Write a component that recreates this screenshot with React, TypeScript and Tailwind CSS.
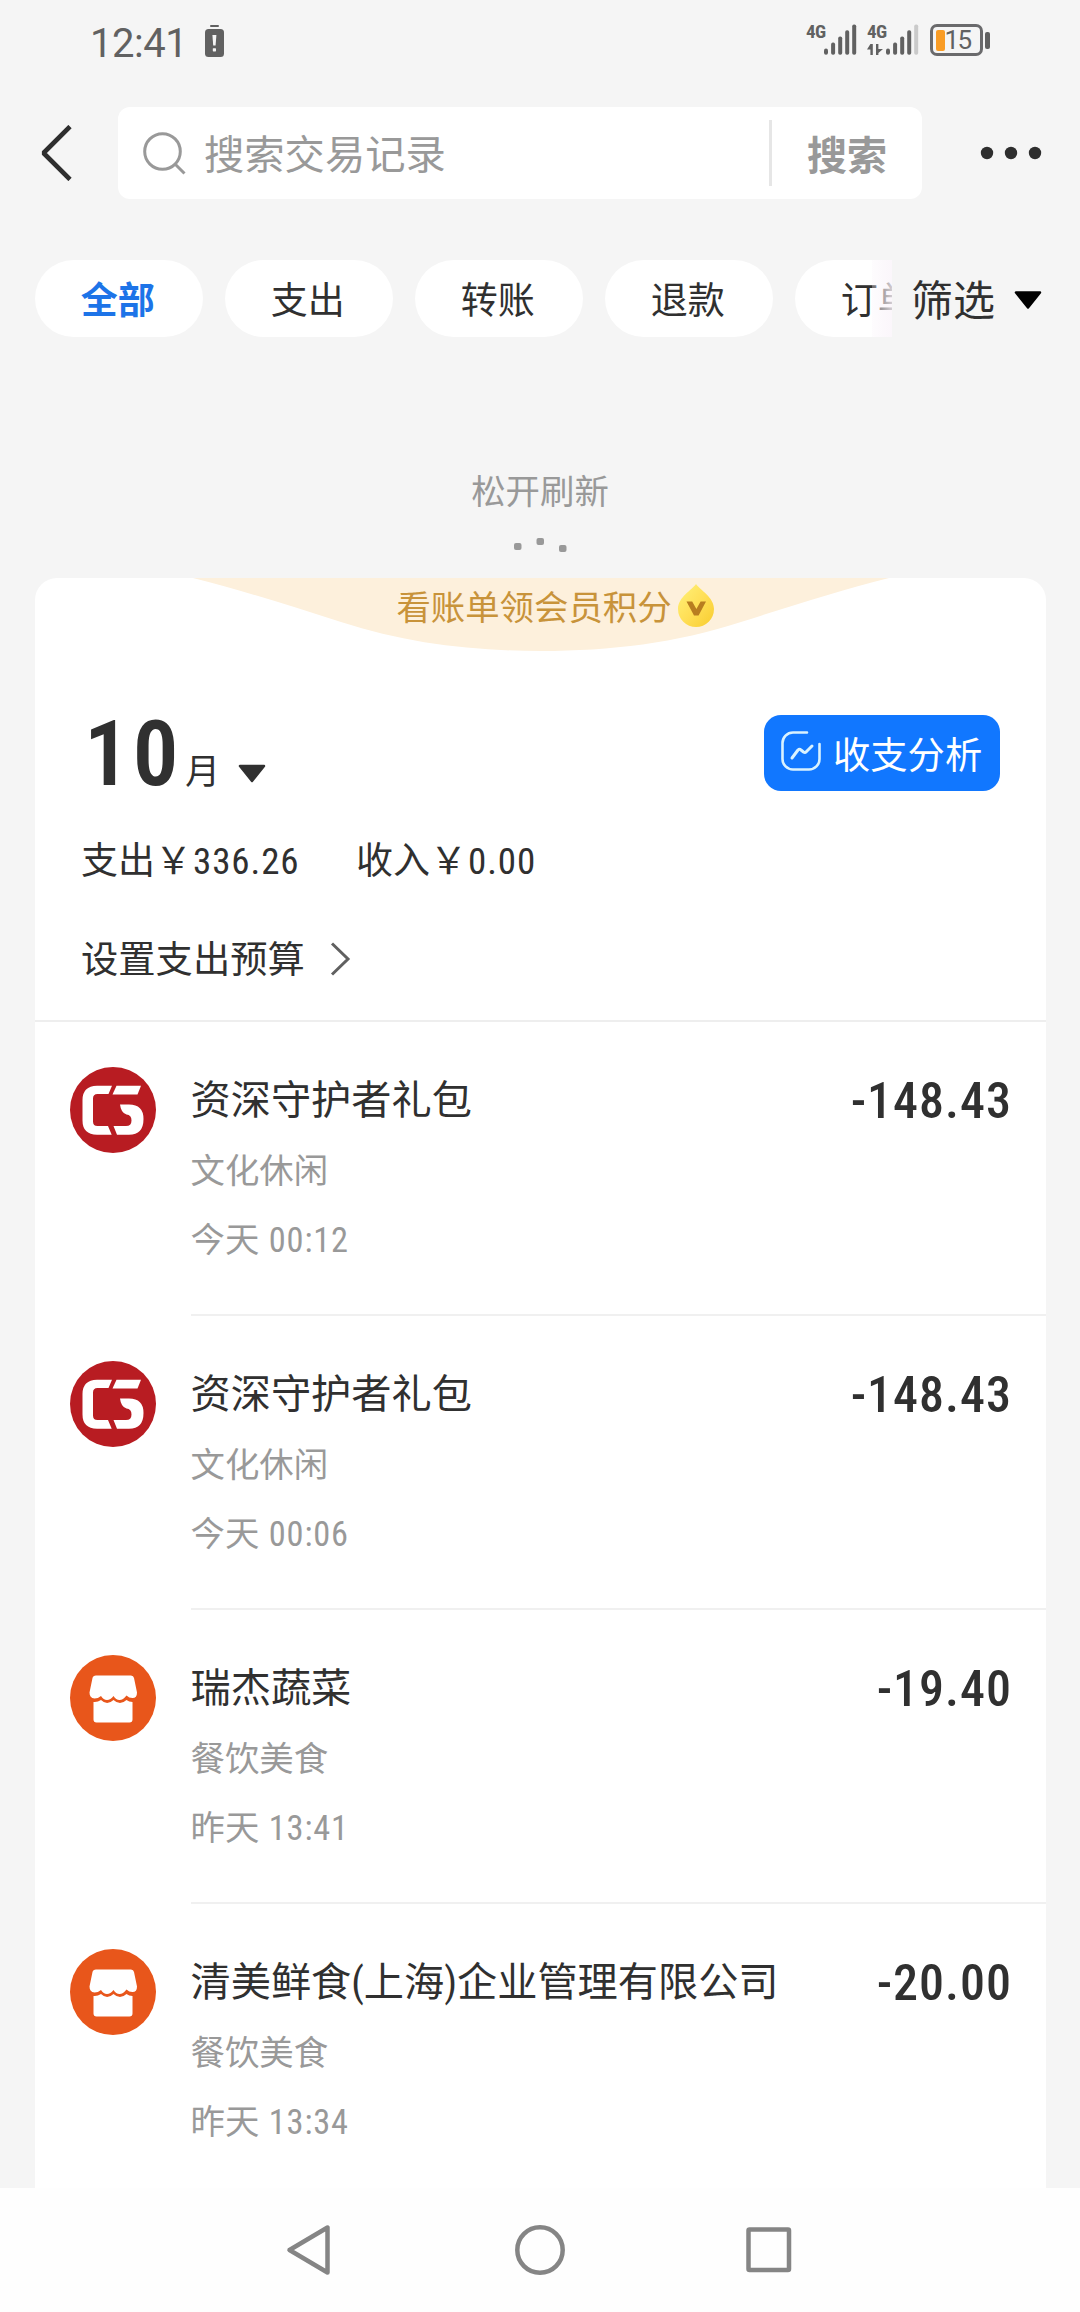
import { clsx } from "clsx";

interface Bill {
  id: number;
  logo: "c5" | "shop";
  title: string;
  category: string;
  day: string;
  time: string;
  amount: string;
}

const TABS = ["全部", "支出", "转账", "退款", "订单"];

const BILLS: Bill[] = [
  { id: 1, logo: "c5", title: "资深守护者礼包", category: "文化休闲", day: "今天", time: "00:12", amount: "-148.43" },
  { id: 2, logo: "c5", title: "资深守护者礼包", category: "文化休闲", day: "今天", time: "00:06", amount: "-148.43" },
  { id: 3, logo: "shop", title: "瑞杰蔬菜", category: "餐饮美食", day: "昨天", time: "13:41", amount: "-19.40" },
  { id: 4, logo: "shop", title: "清美鲜食(上海)企业管理有限公司", category: "餐饮美食", day: "昨天", time: "13:34", amount: "-20.00" },
];

function Signal({ weak = false }: { weak?: boolean }) {
  return (
    <svg width="33" height="32" viewBox="0 0 33 32" fill="#616161">
      <rect x="0" y="24.6" width="4" height="6.2" rx="2" />
      <rect x="7.1" y="18.6" width="4" height="12.2" rx="1.8" />
      <rect x="14.2" y="12.4" width="4" height="18.4" rx="1.8" />
      <rect x="21.2" y="6.2" width="4" height="24.6" rx="1.8" />
      <rect x="28.2" y="0.4" width="4" height="30.4" rx="1.8" fill={weak ? "#cacaca" : "#616161"} />
    </svg>
  );
}

function StatusBar() {
  return (
    <div className="flex h-[107px] shrink-0 items-start pt-[24px] text-[#616161]">
      <div className="ml-[90px] w-[115px] text-[40px] leading-[40px] font-[450] tracking-[-0.5px]">12:41</div>
      <svg width="20" height="34" viewBox="0 0 20 34" className="mt-px">
        <rect x="5" y="0" width="9" height="2" rx="1" fill="#616161" />
        <rect x="0" y="4" width="19" height="28" rx="3.5" fill="#616161" />
        <path d="M7.4 10h4l-.8 10.5h-2.4z" fill="#f5f5f5" />
        <rect x="7.8" y="23.2" width="3.2" height="3.2" rx=".6" fill="#f5f5f5" />
      </svg>

      <div className="mr-[90.5px] ml-auto flex">
        <div className="w-[18px] text-[19px] leading-[16px] font-bold font-stretch-condensed tracking-[-0.5px]">4G</div>
        <Signal />
        <div className="ml-[10px] flex w-[19px] flex-col gap-[4px]">
          <div className="text-[19px] leading-[16px] font-bold font-stretch-condensed tracking-[-0.5px]">4G</div>
          <svg width="16" height="11" viewBox="0 0 16 11" fill="#616161">
            <path d="M3.4 0h2.4v11H3.4V5.4H0zM9 0h2.4l0 5 4.6 0-4.6 4V11H9z" />
          </svg>
        </div>
        <Signal weak />
        <div className="ml-[11px] flex items-center">
          <div className="flex h-[32px] w-[53px] items-center rounded-[7px] border-[3px] border-[#6a6a6c] pl-[2.5px]">
            <div className="h-[21px] w-[9px] rounded-[2px] bg-[#f99c25]" />
            <div className="text-[26px] leading-[26px] tracking-[-1.5px]">15</div>
          </div>
          <div className="ml-[2px] h-[17px] w-[4.5px] rounded-[2px] bg-[#616161]" />
        </div>
      </div>
    </div>
  );
}

function SearchHeader() {
  return (
    <div className="flex h-[92px] shrink-0 items-center pr-[38px] pl-[39px]">
      <svg width="79" height="56" viewBox="0 0 79 56" fill="none" stroke="#2e2e2e" strokeWidth="4.6">
        <path d="M31 1.5 4.5 28 31 54.5" strokeLinejoin="bevel" />
      </svg>
      <div className="flex h-[92px] w-[804px] items-center rounded-[12px] bg-white text-[40.3px] leading-[44px] text-[#999999]">
        <svg width="46" height="46" viewBox="0 0 46 46" fill="none" stroke="#999999" strokeWidth="3" className="ml-[25px]">
          <circle cx="19.5" cy="21.5" r="17.8" />
          <path d="M32 34l9.5 9.5" />
        </svg>
        <div className="ml-[15px] flex-1 pt-[5px]">搜索交易记录</div>
        <div className="h-[66px] w-[3px] bg-[#e6e6e6]" />
        <div className="w-[150px] pt-[7px] pl-[35px] text-[40px] font-bold">搜索</div>
      </div>
      <svg width="62" height="14" viewBox="0 0 62 14" fill="#2e2e2e" className="ml-auto">
        <circle cx="7" cy="7" r="6.2" />
        <circle cx="31" cy="7" r="6.2" />
        <circle cx="55" cy="7" r="6.2" />
      </svg>
    </div>
  );
}

function FilterTabs() {
  return (
    <div className="mt-[61px] flex h-[77px] shrink-0 items-center pl-[35px]">
      <div className="relative flex h-full w-[857px] gap-[22.5px] overflow-hidden">
        {TABS.map((t, i) => (
          <div
            key={t}
            className={clsx(
              "flex h-full w-[167.5px] shrink-0 items-center justify-center rounded-full bg-white pt-[7px] pr-[2px] text-[37px]",
              i === 0 ? "font-bold text-[#1d74e8]" : "text-[#303030]",
            )}
          >
            {t}
          </div>
        ))}
        <div className="absolute top-0 right-0 h-full w-[20px] bg-linear-to-r from-[#faf4fa]/30 to-[#faf4fa]/80" />
      </div>
      <div className="ml-[19px] pt-[7px] text-[42px] leading-[46px] text-[#303030]">筛选</div>
      <svg width="30" height="20" viewBox="0 0 30 20" className="ml-[18px]">
        <path d="M3 3.5h24L15 18.500z" stroke="#000" strokeWidth="2.5" strokeLinejoin="round" />
      </svg>
    </div>
  );
}

function PointsBanner() {
  return (
    <div className="relative flex h-[74px] w-full shrink-0 justify-center pt-[11px]">
      <svg width="700" height="74" viewBox="0 0 700 74" className="absolute top-0 left-[156px]">
        <path d="M2 0C50 12 100 28 150 44C215 65 280 73 350 73C420 73 485 65 550 44C600 28 650 12 698 0Z" fill="#fdf0dc" />
      </svg>
      <div className="relative ml-[30px] flex h-[38px] items-center">
        <span className="text-[34.4px] leading-[38px] text-[#c8933a]">看账单领会员积分</span>
        <svg width="38" height="44" viewBox="0 0 38 44" className="mt-[-6px] ml-[5px]">
          <defs>
            <linearGradient id="drop" x1="0" y1="0" x2="1" y2="1">
              <stop offset="0" stopColor="#fff27a" />
              <stop offset="0.5" stopColor="#ffdf57" />
              <stop offset="1" stopColor="#f8cc2e" />
            </linearGradient>
          </defs>
          <path d="M19 1C23 7 37 14 37 26A18 18 0 0 1 1 26C1 14 15 7 19 1Z" fill="url(#drop)" />
          <path d="M9.5 18.5H15.2L19.4 26L23.6 18.5H29L21.6 32.5H17z" fill="#b87d20" />
        </svg>
      </div>
    </div>
  );
}

function MonthSummary() {
  return (
    <div className="flex h-[370px] shrink-0 flex-col border-b-2 border-[#eeeeee] pr-[46px] pl-[46px] text-[#303030]">
      <div className="mt-[63px] flex h-[76px] items-start">
        <div className="mt-[-1px] ml-[3px] w-[101px] text-[91px] leading-[80px] font-semibold font-stretch-condensed tracking-[3px]">10</div>
        <div className="mt-[41px] text-[35px] leading-[34px]">月</div>
        <svg width="30" height="20" viewBox="0 0 30 20" className="mt-[48px] ml-[17px]">
          <path d="M3 3h24L15 18z" fill="#303030" stroke="#303030" strokeWidth="2.5" strokeLinejoin="round" />
        </svg>
        <button className="ml-auto flex h-[76px] w-[236px] items-center rounded-[17px] bg-[#1177ff] pl-[17px] text-white">
          <svg width="40" height="40" viewBox="0 0 40 40" fill="none" stroke="#d9f2ff" strokeWidth="2.6" strokeLinecap="round" strokeLinejoin="round" className="mt-[-4px]">
            <path d="M26 1.5H12A10.5 10.5 0 0 0 1.5 12v16A10.5 10.5 0 0 0 12 38.5h16A10.5 10.5 0 0 0 38.5 28V13" />
            <path d="M11 27l6-8q1.5-1.5 3 0l2.5 2q1.5 1 2.5 0L31 15" strokeWidth="3" />
          </svg>
          <span className="ml-[12px] pt-[5px] text-[37.3px] leading-[40px]">收支分析</span>
        </button>
      </div>
      <div className="mt-[49px] flex h-[44px] items-center text-[37px] leading-[44px]">
        <div className="w-[275px]">
          支出￥<span className="ml-px font-stretch-semi-condensed tracking-[0.9px]">336.26</span>
        </div>
        <div>
          收入￥<span className="ml-px font-stretch-semi-condensed tracking-[0.9px]">0.00</span>
        </div>
      </div>
      <div className="mt-[54px] flex h-[44px] items-center text-[37.3px] leading-[44px]">
        设置支出预算
        <svg width="22" height="34" viewBox="0 0 22 34" fill="none" stroke="#606060" strokeWidth="3" className="mt-[-2px] ml-[25px]">
          <path d="M2 1.5L18 17 2 32.5" />
        </svg>
      </div>
    </div>
  );
}

function C5Logo() {
  return (
    <svg width="86" height="86" viewBox="0 0 86 86">
      <circle cx="43" cy="43" r="43" fill="#b81c22" />
      <g fill="#fff">
        <path d="M42 18.7H27Q12.5 19 12.5 33v20.500Q12.5 67.5 27 67.7H41.7L38 59H27.5Q23 59 23 54.5V31.5Q23 27 27.5 27H38.5z" />
        <path d="M46.5 18.7H71L67.5 27.500H42.5z" />
        <path d="M50 37.5H59Q73.5 37.500 73.5 52Q73.5 67.7 59 67.7H47L43.5 59H56Q61.500 59 61.500 53.500Q61.500 48 56.500 47.500Q51 46 50 37.5z" />
      </g>
    </svg>
  );
}

function ShopLogo() {
  return (
    <svg width="86" height="86" viewBox="0 0 86 86">
      <circle cx="43" cy="43" r="43" fill="#e8561b" />
      <g fill="#fff">
        <path d="M26 20.5H61Q63.5 20.5 64 23L67 37.5Q67 43 62.5 43Q59 43 56.5 40.5Q53 45 49.5 45Q46 45 43.5 41Q40.5 45 37 45Q33.5 45 31 41Q28 43.5 24.5 43.5Q19.5 43 19.5 37.5L22.5 23Q23 20.5 26 20.5z" />
        <path d="M23.5 47Q27.5 47.5 31 45Q37 51 43.5 45Q50 51 56.5 45Q59 47 62.5 47V64.5Q62.5 67.5 59.5 67.5H26.5Q23.5 67.5 23.5 64.5z" />
      </g>
    </svg>
  );
}

function BillRow({ bill }: { bill: Bill }) {
  return (
    <div className="flex h-[294px] shrink-0 pl-[35px]">
      <div className="w-[120.5px] pt-[45px]">{bill.logo === "c5" ? <C5Logo /> : <ShopLogo />}</div>
      <div className="flex flex-1 flex-col border-b-2 border-[#f0f0f0] pt-[56px] pr-[34px]">
        <div className="flex h-[46px] items-center justify-between text-[#303030]">
          <div className="text-[40.2px] leading-[46px] font-stretch-condensed">{bill.title}</div>
          <div className="text-[50px] leading-[46px] font-medium font-stretch-semi-condensed tracking-[1px]">{bill.amount}</div>
        </div>
        <div className="mt-[27px] text-[34.4px] leading-[40px] text-[#999999]">{bill.category}</div>
        <div className="mt-[29px] text-[34.4px] leading-[40px] text-[#999999]">
          {bill.day} <span className="ml-px font-stretch-semi-condensed tracking-[0.8px]">{bill.time}</span>
        </div>
      </div>
    </div>
  );
}

function NavBar() {
  return (
    <div className="flex h-[124px] shrink-0 items-center bg-[#fefefe] pl-[284px]">
      <svg width="510" height="54" viewBox="0 0 510 54" fill="none" stroke="#858585" strokeWidth="4.5" strokeLinejoin="round">
        <path d="M43.5 4.5v45L5.5 27z" />
        <circle cx="256" cy="27" r="22.7" />
        <rect x="464.5" y="6.5" width="40.5" height="40.5" rx="1" />
      </svg>
    </div>
  );
}

export default function App() {
  return (
    <div className="flex h-[2312px] w-[1080px] flex-col overflow-hidden bg-[#f5f5f5] font-['Roboto','Noto_Sans_CJK_SC',sans-serif]">
      <StatusBar />
      <SearchHeader />
      <FilterTabs />

      {/* pull to refresh */}
      <div className="flex h-[241px] shrink-0 flex-col items-center pt-[135px]">
        <div className="text-[34.4px] leading-[40px] text-[#999999]">松开刷新</div>
        <svg width="54" height="16" viewBox="0 0 54 16" fill="#999999" className="mt-[24.5px]">
          <rect x="1" y="6" width="7.5" height="7" rx="2" />
          <rect x="23.5" y="1" width="7.5" height="7" rx="2" />
          <rect x="46" y="8" width="7.5" height="7" rx="2" />
        </svg>
      </div>

      <div className="mr-[34px] ml-[35px] flex min-h-0 flex-1 flex-col overflow-hidden rounded-t-[22px] bg-white">
        <PointsBanner />
        <MonthSummary />
        {BILLS.map((b) => (
          <BillRow key={b.id} bill={b} />
        ))}
      </div>
      <NavBar />
    </div>
  );
}
